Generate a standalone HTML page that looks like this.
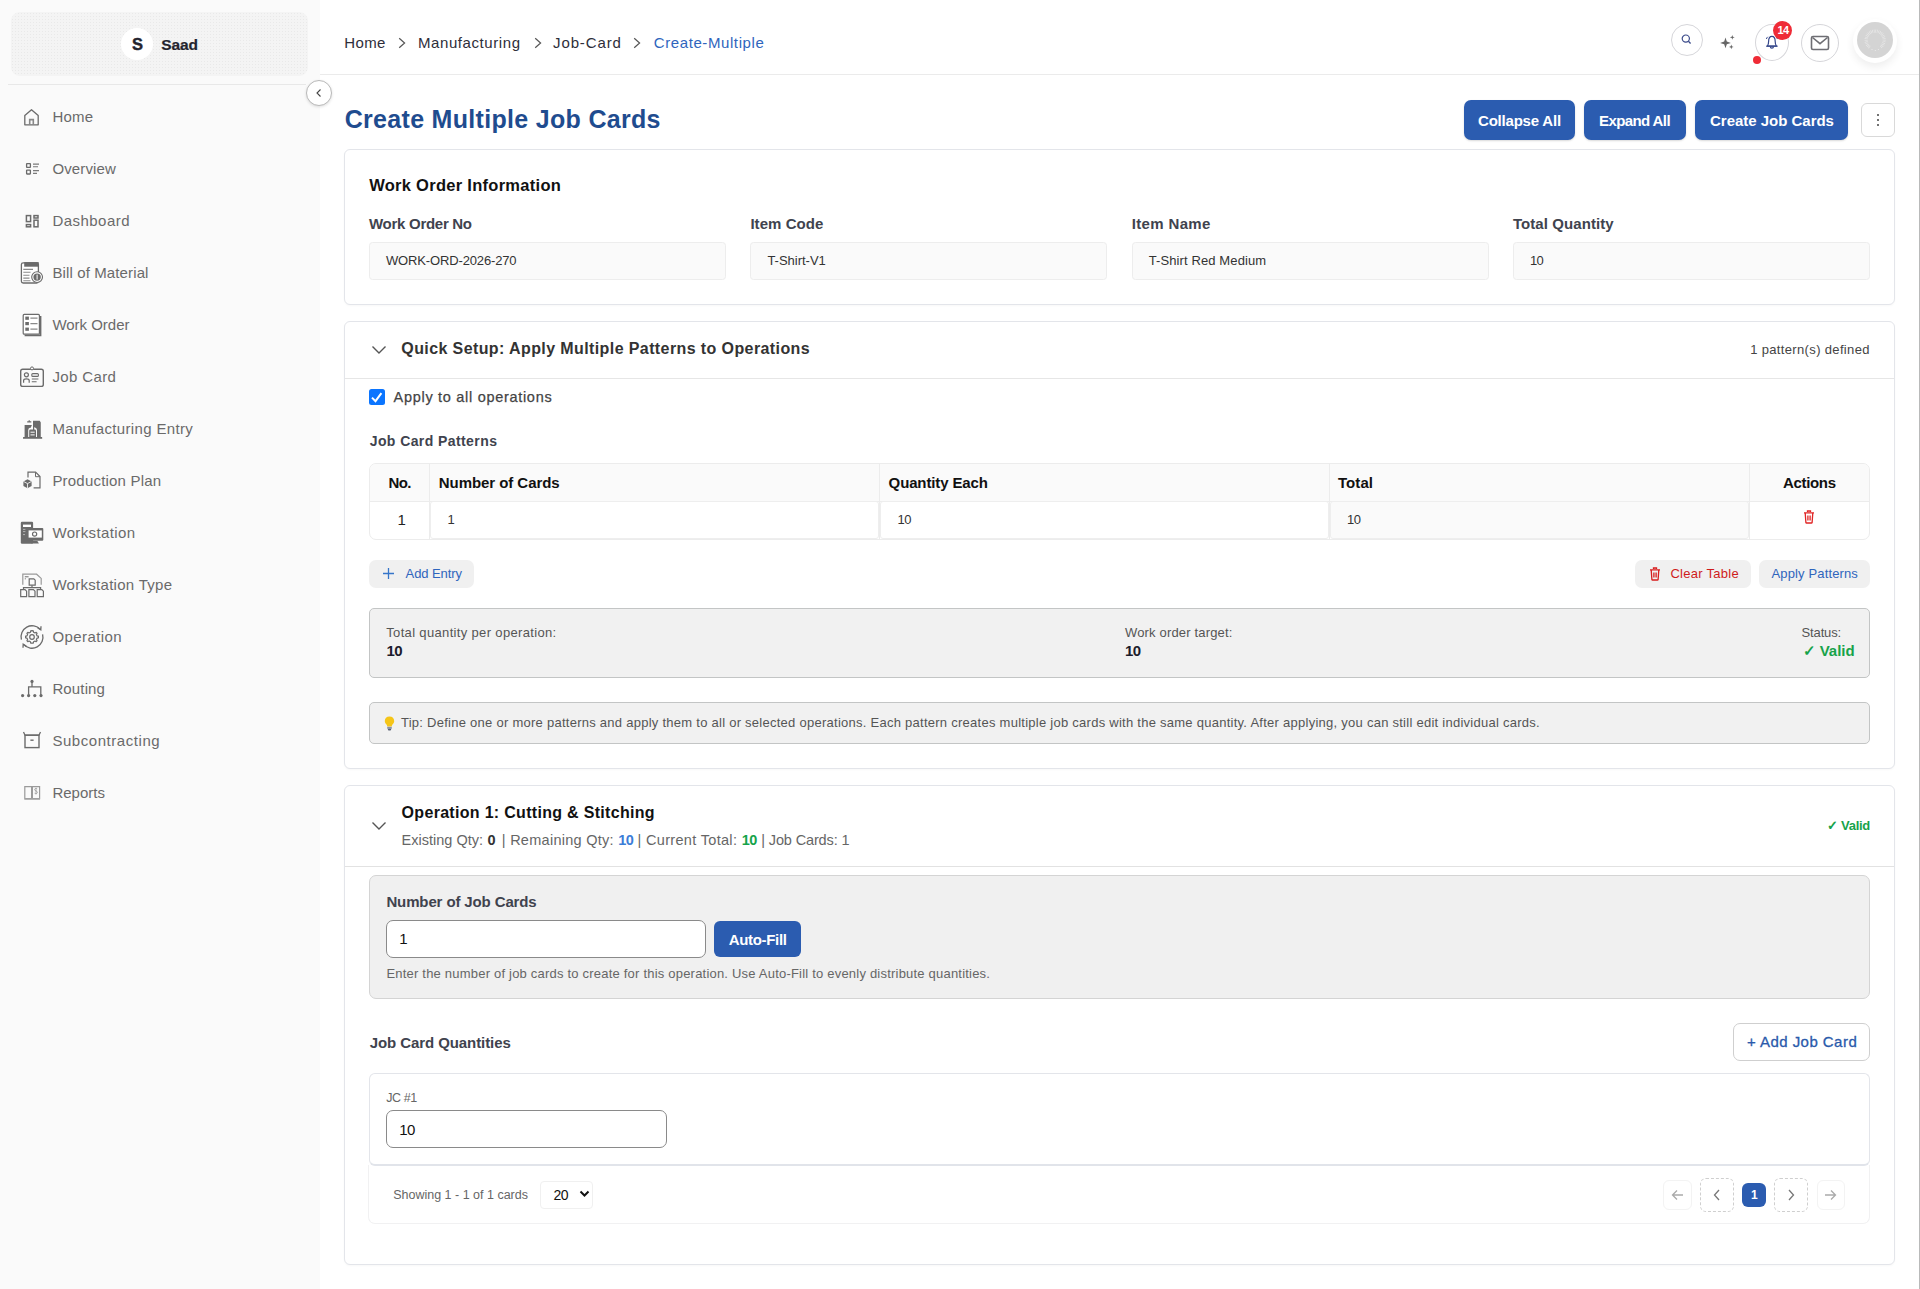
<!DOCTYPE html>
<html><head><meta charset="utf-8"><title>Create Multiple Job Cards</title>
<style>
html,body{margin:0;padding:0;}
body{width:1920px;height:1289px;position:relative;overflow:hidden;background:#fff;font-family:"Liberation Sans",sans-serif;}
.t{position:absolute;white-space:pre;}
.b{position:absolute;}
svg.b{overflow:visible;}
</style></head><body>
<div class="b" style="left:0px;top:0px;width:320px;height:1289px;background:#fafafa;"></div><div class="b" style="left:11px;top:12px;width:297px;height:64px;border-radius:9px;background-color:#f4f4f4;background-image:radial-gradient(#e9e9e9 0.55px,transparent 0.75px);background-size:3px 3px;"></div><div class="b" style="left:121px;top:28px;width:32px;height:32px;border-radius:50%;background:#fff;"></div><span class="t" style="left:132.00px;top:35.73px;font-size:16.5px;line-height:16.5px;color:#24242e;font-weight:700;-webkit-text-stroke:0.4px #24242e;">S</span><span class="t" style="left:161.30px;top:36.58px;font-size:15.5px;line-height:15.5px;color:#24242e;font-weight:700;letter-spacing:-0.167px;-webkit-text-stroke:0.2px #24242e;">Saad</span><div class="b" style="left:8px;top:84px;width:298px;height:1px;background:#e8e8e8;"></div><span class="t" style="left:52.40px;top:109.30px;font-size:15px;line-height:15px;color:#6a6a6a;letter-spacing:0.200px;">Home</span><span class="t" style="left:52.40px;top:161.30px;font-size:15px;line-height:15px;color:#6a6a6a;letter-spacing:0.143px;">Overview</span><span class="t" style="left:52.40px;top:213.30px;font-size:15px;line-height:15px;color:#6a6a6a;letter-spacing:0.466px;">Dashboard</span><span class="t" style="left:52.40px;top:265.30px;font-size:15px;line-height:15px;color:#6a6a6a;letter-spacing:0.123px;">Bill of Material</span><span class="t" style="left:52.40px;top:317.30px;font-size:15px;line-height:15px;color:#6a6a6a;letter-spacing:-0.017px;">Work Order</span><span class="t" style="left:52.40px;top:369.30px;font-size:15px;line-height:15px;color:#6a6a6a;letter-spacing:0.375px;">Job Card</span><span class="t" style="left:52.40px;top:421.30px;font-size:15px;line-height:15px;color:#6a6a6a;letter-spacing:0.342px;">Manufacturing Entry</span><span class="t" style="left:52.40px;top:473.30px;font-size:15px;line-height:15px;color:#6a6a6a;letter-spacing:0.202px;">Production Plan</span><span class="t" style="left:52.40px;top:525.30px;font-size:15px;line-height:15px;color:#6a6a6a;letter-spacing:0.372px;">Workstation</span><span class="t" style="left:52.40px;top:577.30px;font-size:15px;line-height:15px;color:#6a6a6a;letter-spacing:0.288px;">Workstation Type</span><span class="t" style="left:52.40px;top:629.30px;font-size:15px;line-height:15px;color:#6a6a6a;letter-spacing:0.428px;">Operation</span><span class="t" style="left:52.40px;top:681.30px;font-size:15px;line-height:15px;color:#6a6a6a;letter-spacing:0.142px;">Routing</span><span class="t" style="left:52.40px;top:733.30px;font-size:15px;line-height:15px;color:#6a6a6a;letter-spacing:0.552px;">Subcontracting</span><span class="t" style="left:52.40px;top:785.30px;font-size:15px;line-height:15px;color:#6a6a6a;letter-spacing:0.017px;">Reports</span><svg class="b" style="left:16px;top:101px" width="32" height="32" viewBox="0 0 32 32"><path d="M8.8 23.8 V14.6 L15.5 8.7 L22.2 14.6 V23.8 Z" fill="none" stroke="#6b6b6b" stroke-width="1.3" stroke-linejoin="round"/><path d="M13.7 23.8 V18.6 H17.3 V23.8" fill="none" stroke="#888" stroke-width="1.6"/></svg><svg class="b" style="left:16px;top:153px" width="32" height="32" viewBox="0 0 32 32"><g fill="none" stroke="#6b6b6b" stroke-width="1.3"><rect x="10.6" y="10.6" width="3.8" height="3.8" rx="0.4"/><rect x="10.6" y="17.2" width="3.8" height="3.8" rx="0.4"/></g><g stroke="#7a7a7a" stroke-width="1.1"><path d="M17 11.1 H23 M17 13.8 H22 M17 17.6 H23 M17 20.4 H21"/></g></svg><svg class="b" style="left:16px;top:205px" width="32" height="32" viewBox="0 0 32 32"><g fill="none" stroke="#6b6b6b" stroke-width="1.5"><rect x="10.4" y="10.6" width="4.2" height="6"/><rect x="18" y="10.6" width="4" height="2.4"/><rect x="10.4" y="19.6" width="4.2" height="2.2"/><rect x="18" y="15.2" width="4" height="6.6"/></g></svg><svg class="b" style="left:16px;top:257px" width="32" height="32" viewBox="0 0 32 32"><rect x="5.4" y="5.8" width="17" height="20.2" rx="1.8" fill="#fff" stroke="#6b6b6b" stroke-width="1.3"/><rect x="8.2" y="5.1" width="14.5" height="4.6" fill="#6b6b6b"/><g stroke="#8a8a8a" stroke-width="1.1"><path d="M7.3 12.4 H17 M7.3 15.3 H14.5 M7.3 18.3 H13.5 M7.3 21.1 H13.5 M7.3 23.8 H14.5"/></g><circle cx="21.1" cy="20.1" r="5.4" fill="#fff" stroke="#6b6b6b" stroke-width="1.1"/><circle cx="21.1" cy="20.1" r="3.7" fill="#6b6b6b"/><path d="M21.1 17.6 V22.6" stroke="#fff" stroke-width="1"/></svg><svg class="b" style="left:16px;top:309px" width="32" height="32" viewBox="0 0 32 32"><path d="M24.6 7 V26.4 H8.6" fill="none" stroke="#6b6b6b" stroke-width="1.6"/><rect x="7.2" y="5.4" width="16.2" height="19.8" rx="1" fill="#fff" stroke="#6b6b6b" stroke-width="1.2"/><g fill="#6b6b6b"><rect x="9.3" y="7.6" width="3.6" height="3.2"/><rect x="9.3" y="13" width="3.6" height="3.2"/><rect x="9.3" y="18.6" width="3.6" height="3.2"/></g><g stroke="#8a8a8a" stroke-width="1.2"><path d="M14.4 9.2 H21.5 M14.4 14.6 H21.5 M14.4 20.2 H21.5"/></g></svg><svg class="b" style="left:16px;top:361px" width="32" height="32" viewBox="0 0 32 32"><rect x="4.7" y="8.2" width="22.6" height="17.2" rx="2" fill="none" stroke="#6b6b6b" stroke-width="1.4"/><circle cx="16" cy="7.4" r="1.5" fill="#fafafa" stroke="#6b6b6b" stroke-width="1"/><circle cx="10.4" cy="13.8" r="2" fill="none" stroke="#6b6b6b" stroke-width="1.2"/><path d="M7.6 21.8 V19.6 C7.6 17.2 13.2 17.2 13.2 19.6 V21.8" fill="none" stroke="#6b6b6b" stroke-width="1.2"/><rect x="15.8" y="12.6" width="6.6" height="2.8" rx="1" fill="none" stroke="#6b6b6b" stroke-width="1.1"/><path d="M15.8 18 H22.4 M15.8 20.8 H20.6" stroke="#6b6b6b" stroke-width="1.1"/></svg><svg class="b" style="left:16px;top:413px" width="32" height="32" viewBox="0 0 32 32"><path d="M7.3 24.6 H26 M9.2 24.6 V12.6 H15 L14.2 14.6 M17.6 24.6 V8.3 H23.4 L24 9.5 V24.6" fill="none" stroke="#6b6b6b" stroke-width="1.2"/><path d="M9 24.6 V13 Q9 12.4 9.6 12.4 H15.4 L14.2 14.4 Q12.2 15 12.2 17 V24.6 Z M17.5 8.2 H23.4 L24.4 9.4 V24.6 H21 V17 Q21 15 19 14.4 L17.5 14 Z" fill="#6b6b6b"/><rect x="13.2" y="16.4" width="6.8" height="8.2" rx="1.4" fill="#6b6b6b"/><path d="M14.5 19.2 H18.7 M14.5 21.9 H18.7" stroke="#fff" stroke-width="1"/><path d="M11.2 8.8 H15.3 M13.2 7.2 V9" stroke="#6b6b6b" stroke-width="1.2"/><path d="M7 25 H26.2" stroke="#6b6b6b" stroke-width="1.4"/></svg><svg class="b" style="left:16px;top:465px" width="32" height="32" viewBox="0 0 32 32"><path d="M12 12.5 V7.2 H19.6 L24 11.6 V22.8 H17.6" fill="none" stroke="#6b6b6b" stroke-width="1.2"/><path d="M19.5 7.3 V11.7 H23.9" fill="none" stroke="#6b6b6b" stroke-width="1"/><path d="M11.5 14.2 L15.6 16.4 V21 L11.5 23.2 L7.4 21 V16.4 Z" fill="#6b6b6b"/><path d="M7.6 16.5 L11.5 18.6 L15.4 16.5 M11.5 18.6 V23" fill="none" stroke="#fff" stroke-width="0.8"/></svg><svg class="b" style="left:16px;top:517px" width="32" height="32" viewBox="0 0 32 32"><rect x="4.8" y="4.8" width="12.3" height="22" rx="1.2" fill="#6b6b6b"/><rect x="7" y="7.6" width="8" height="2.4" fill="#fff"/><path d="M7 12.4 H9.4 M7 14.6 H9.4 M7 17.6 H9" stroke="#bbb" stroke-width="0.9"/><rect x="10.9" y="10.9" width="16.4" height="12.9" rx="1" fill="#6b6b6b"/><rect x="12.6" y="13.4" width="13.2" height="7.2" fill="#fff"/><circle cx="18.6" cy="17.1" r="2.1" fill="none" stroke="#6b6b6b" stroke-width="1.2"/><path d="M15.3 26.4 L16.6 24 H21.4 L22.9 26.4 Z" fill="#6b6b6b"/></svg><svg class="b" style="left:16px;top:569px" width="32" height="32" viewBox="0 0 32 32"><path d="M6.8 15.8 V5.2 H20.6 L25.2 9.4 V15.8" fill="none" stroke="#9a9a9a" stroke-width="1.2"/><path d="M8.8 7.8 H12.6 M8.8 9.8 H9.8" stroke="#6b6b6b" stroke-width="1"/><g fill="none" stroke="#6b6b6b" stroke-width="1.2"><path d="M13.2 9.8 H17.8 L19.2 11.2 V16.2 H13.2 Z"/><path d="M7.5 20.2 V18.6 H24.6 V20.2 M16 16.2 V18.6"/><path d="M4.7 20.6 H9 L10.6 22.2 V27.6 H4.7 Z"/><path d="M12.9 20.6 H17.4 L19 22.2 V27.6 H12.9 Z"/><path d="M21.2 20.6 H25.8 L27.4 22.2 V27.6 H21.2 Z"/></g></svg><svg class="b" style="left:16px;top:621px" width="32" height="32" viewBox="0 0 32 32"><path d="M5.4 18.6 A11 11 0 0 1 24.2 8.4 M26.6 13.4 A11 11 0 0 1 7.8 23.6" fill="none" stroke="#6b6b6b" stroke-width="1.3"/><path d="M21.6 6.6 L24.8 8.8 L25 5.2" fill="none" stroke="#6b6b6b" stroke-width="1.3"/><path d="M10.4 25.4 L7.2 23.2 L7 26.8" fill="none" stroke="#6b6b6b" stroke-width="1.3"/><path d="M16 9.6 L17.3 9.9 L17.6 11.3 L19 12 L20.2 11.3 L21.1 12.3 L20.4 13.5 L21 14.8 L22.4 15.2 V16.8 L21 17.2 L20.4 18.5 L21.1 19.7 L20.2 20.7 L19 20 L17.6 20.7 L17.3 22.1 H14.7 L14.4 20.7 L13 20 L11.8 20.7 L10.9 19.7 L11.6 18.5 L11 17.2 L9.6 16.8 V15.2 L11 14.8 L11.6 13.5 L10.9 12.3 L11.8 11.3 L13 12 L14.4 11.3 L14.7 9.9 Z" fill="none" stroke="#6b6b6b" stroke-width="1.2" stroke-linejoin="round"/><circle cx="16" cy="16" r="2.3" fill="none" stroke="#6b6b6b" stroke-width="1.2"/></svg><svg class="b" style="left:16px;top:673px" width="32" height="32" viewBox="0 0 32 32"><path d="M16 8.6 V13.8 M12.6 22.4 V13.8 H24.8 V22.4" fill="none" stroke="#6b6b6b" stroke-width="1.3"/><g fill="#6b6b6b"><circle cx="16" cy="8.4" r="1.6"/><circle cx="6.6" cy="22.6" r="1.6"/><circle cx="12.6" cy="22.6" r="1.6"/><circle cx="18.8" cy="22.6" r="1.6"/><circle cx="25" cy="22.6" r="1.6"/></g></svg><svg class="b" style="left:16px;top:725px" width="32" height="32" viewBox="0 0 32 32"><path d="M7.5 7 L9 10.2 H23 L24.5 7" fill="none" stroke="#6b6b6b" stroke-width="1.3"/><rect x="9" y="10.2" width="14" height="12.4" fill="none" stroke="#6b6b6b" stroke-width="1.4"/><path d="M14.4 15.2 H17.6" stroke="#6b6b6b" stroke-width="1.4"/></svg><svg class="b" style="left:16px;top:777px" width="32" height="32" viewBox="0 0 32 32"><path d="M8.8 9.6 H15.6 V21.6 H8.8 Z M16.4 9.6 H23.6 V21.6 H16.4 Z" fill="none" stroke="#9a9a9a" stroke-width="1.2"/><path d="M8.4 22.2 H24" stroke="#aaa" stroke-width="1.2"/><path d="M21.2 11.8 C20.6 11.2 18.6 11.2 18.6 12.6 C18.6 14.2 21.4 13.6 21.4 15.4 C21.4 16.8 19.2 16.8 18.6 16.2 M20 10.8 V17.4" fill="none" stroke="#9a9a9a" stroke-width="0.8"/></svg><div class="b" style="left:306px;top:80px;width:24px;height:24px;border-radius:50%;background:#fff;border:1px solid #b9b9b9;box-shadow:0 1px 3px rgba(0,0,0,0.12);"></div><svg class="b" style="left:313px;top:87px" width="12" height="12" viewBox="0 0 12 12"><path d="M7.5 2.5 L4 6 L7.5 9.5" fill="none" stroke="#444" stroke-width="1.1"/></svg><div class="b" style="left:320px;top:74px;width:1599px;height:1px;background:#ebebeb;"></div><div class="b" style="left:1919px;top:0px;width:1px;height:1289px;background:#b9baba;"></div><span class="t" style="left:344.20px;top:35.20px;font-size:15px;line-height:15px;color:#2e2e3a;letter-spacing:0.400px;">Home</span><span class="t" style="left:418.00px;top:35.20px;font-size:15px;line-height:15px;color:#2e2e3a;letter-spacing:0.583px;">Manufacturing</span><span class="t" style="left:553.00px;top:35.20px;font-size:15px;line-height:15px;color:#2e2e3a;letter-spacing:0.893px;">Job-Card</span><span class="t" style="left:653.80px;top:35.20px;font-size:15px;line-height:15px;color:#2f65bd;letter-spacing:0.589px;">Create-Multiple</span><svg class="b" style="left:397px;top:37px" width="10" height="12" viewBox="0 0 10 12"><path d="M2.2 1.2 L7.6 6 L2.2 10.8" fill="none" stroke="#555" stroke-width="1.2"/></svg><svg class="b" style="left:532.5px;top:37px" width="10" height="12" viewBox="0 0 10 12"><path d="M2.2 1.2 L7.6 6 L2.2 10.8" fill="none" stroke="#555" stroke-width="1.2"/></svg><svg class="b" style="left:632px;top:37px" width="10" height="12" viewBox="0 0 10 12"><path d="M2.2 1.2 L7.6 6 L2.2 10.8" fill="none" stroke="#555" stroke-width="1.2"/></svg><span class="t" style="left:344.70px;top:106.64px;font-size:25px;line-height:25px;color:#1f4c8f;font-weight:700;letter-spacing:0.309px;">Create Multiple Job Cards</span><div class="b" style="left:1464px;top:100px;width:111px;height:40px;background:#2b5cb0;border-radius:7px;box-shadow:0 1px 2px rgba(0,0,0,0.15);"></div><span class="t" style="left:1478.00px;top:112.60px;font-size:15px;line-height:15px;color:#ffffff;font-weight:700;letter-spacing:-0.205px;">Collapse All</span><div class="b" style="left:1584px;top:100px;width:102px;height:40px;background:#2b5cb0;border-radius:7px;box-shadow:0 1px 2px rgba(0,0,0,0.15);"></div><span class="t" style="left:1599.00px;top:112.60px;font-size:15px;line-height:15px;color:#ffffff;font-weight:700;letter-spacing:-0.600px;">Expand All</span><div class="b" style="left:1695px;top:100px;width:153px;height:40px;background:#2b5cb0;border-radius:7px;box-shadow:0 1px 2px rgba(0,0,0,0.15);"></div><span class="t" style="left:1710.00px;top:112.60px;font-size:15px;line-height:15px;color:#ffffff;font-weight:700;letter-spacing:-0.017px;">Create Job Cards</span><div class="b" style="left:1861px;top:103px;width:34px;height:34px;border:1px solid #d9d9d9;border-radius:6px;box-sizing:border-box;background:#fff;"></div><div class="b" style="left:1877px;top:114px;width:2px;height:2px;background:#444;border-radius:50%;"></div><div class="b" style="left:1877px;top:119px;width:2px;height:2px;background:#444;border-radius:50%;"></div><div class="b" style="left:1877px;top:124px;width:2px;height:2px;background:#444;border-radius:50%;"></div><div class="b" style="left:344px;top:149px;width:1551px;height:156px;border:1px solid #e3e5ea;border-radius:6px;background:#fff;box-sizing:border-box;box-shadow:0 1px 2px rgba(0,0,0,0.03);"></div><span class="t" style="left:369.20px;top:176.93px;font-size:16.5px;line-height:16.5px;color:#111111;font-weight:700;letter-spacing:0.279px;">Work Order Information</span><span class="t" style="left:369.00px;top:216.30px;font-size:15px;line-height:15px;color:#40434e;font-weight:700;letter-spacing:-0.281px;">Work Order No</span><div class="b" style="left:369px;top:242px;width:357px;height:38px;background:#fafafa;border:1px solid #ededed;border-radius:3.5px;box-sizing:border-box;"></div><span class="t" style="left:386.00px;top:254.00px;font-size:13px;line-height:13px;color:#333333;letter-spacing:-0.148px;">WORK-ORD-2026-270</span><span class="t" style="left:750.40px;top:216.30px;font-size:15px;line-height:15px;color:#40434e;font-weight:700;letter-spacing:0.062px;">Item Code</span><div class="b" style="left:750.4px;top:242px;width:357px;height:38px;background:#fafafa;border:1px solid #ededed;border-radius:3.5px;box-sizing:border-box;"></div><span class="t" style="left:767.40px;top:254.00px;font-size:13px;line-height:13px;color:#333333;letter-spacing:-0.011px;">T-Shirt-V1</span><span class="t" style="left:1131.70px;top:216.30px;font-size:15px;line-height:15px;color:#40434e;font-weight:700;letter-spacing:0.353px;">Item Name</span><div class="b" style="left:1131.7px;top:242px;width:357px;height:38px;background:#fafafa;border:1px solid #ededed;border-radius:3.5px;box-sizing:border-box;"></div><span class="t" style="left:1148.70px;top:254.00px;font-size:13px;line-height:13px;color:#333333;letter-spacing:0.110px;">T-Shirt Red Medium</span><span class="t" style="left:1512.90px;top:216.30px;font-size:15px;line-height:15px;color:#40434e;font-weight:700;letter-spacing:0.081px;">Total Quantity</span><div class="b" style="left:1512.9px;top:242px;width:357px;height:38px;background:#fafafa;border:1px solid #ededed;border-radius:3.5px;box-sizing:border-box;"></div><span class="t" style="left:1529.90px;top:254.00px;font-size:13px;line-height:13px;color:#333333;letter-spacing:-0.520px;">10</span><div class="b" style="left:344px;top:321px;width:1551px;height:448px;border:1px solid #e3e5ea;border-radius:6px;background:#fff;box-sizing:border-box;box-shadow:0 1px 2px rgba(0,0,0,0.03);"></div><svg class="b" style="left:371px;top:344px" width="16" height="12" viewBox="0 0 16 12"><path d="M1.5 2.5 L8 9 L14.5 2.5" fill="none" stroke="#555" stroke-width="1.4"/></svg><span class="t" style="left:401.30px;top:341.46px;font-size:16px;line-height:16px;color:#333333;font-weight:700;letter-spacing:0.399px;">Quick Setup: Apply Multiple Patterns to Operations</span><span class="t" style="left:1750.20px;top:342.90px;font-size:13px;line-height:13px;color:#444444;letter-spacing:0.345px;">1 pattern(s) defined</span><div class="b" style="left:345px;top:378px;width:1549px;height:1px;background:#e6e6e6;"></div><div class="b" style="left:369px;top:389px;width:16px;height:16px;background:#0b75ff;border-radius:2.5px;"></div><svg class="b" style="left:369px;top:389px" width="16" height="16" viewBox="0 0 16 16"><path d="M3 8.6 L6.5 12.2 L12.4 4.2" fill="none" stroke="#fff" stroke-width="2"/></svg><span class="t" style="left:393.60px;top:389.63px;font-size:14.5px;line-height:14.5px;color:#444444;letter-spacing:0.699px;-webkit-text-stroke:0.25px #444444;">Apply to all operations</span><span class="t" style="left:369.70px;top:433.85px;font-size:14px;line-height:14px;color:#40434e;font-weight:700;letter-spacing:0.417px;">Job Card Patterns</span><div class="b" style="left:369px;top:463px;width:1501px;height:77px;border:1px solid #ececec;border-radius:7px;box-sizing:border-box;overflow:hidden;background:#fff;"><div style="position:absolute;left:0;top:0;width:1501px;height:37px;background:#fafafa;border-bottom:1px solid #ececec;"></div></div><div class="b" style="left:429px;top:464px;width:1px;height:75px;background:#ececec;"></div><div class="b" style="left:879px;top:464px;width:1px;height:75px;background:#ececec;"></div><div class="b" style="left:1329px;top:464px;width:1px;height:75px;background:#ececec;"></div><div class="b" style="left:1749px;top:464px;width:1px;height:75px;background:#ececec;"></div><div class="b" style="left:430px;top:501px;width:449px;height:38px;background:#fff;border:1px solid #eeeeee;border-radius:3px;box-sizing:border-box;"></div><div class="b" style="left:880px;top:501px;width:449px;height:38px;background:#fff;border:1px solid #eeeeee;border-radius:3px;box-sizing:border-box;"></div><div class="b" style="left:1330px;top:501px;width:419px;height:38px;background:#fafafa;border:1px solid #eeeeee;border-radius:3px;box-sizing:border-box;"></div><span class="t" style="left:388.50px;top:474.60px;font-size:15px;line-height:15px;color:#111111;font-weight:700;letter-spacing:-0.600px;">No.</span><span class="t" style="left:438.80px;top:474.60px;font-size:15px;line-height:15px;color:#111111;font-weight:700;letter-spacing:-0.059px;">Number of Cards</span><span class="t" style="left:888.60px;top:474.60px;font-size:15px;line-height:15px;color:#111111;font-weight:700;letter-spacing:-0.131px;">Quantity Each</span><span class="t" style="left:1338.00px;top:474.60px;font-size:15px;line-height:15px;color:#111111;font-weight:700;letter-spacing:0.062px;">Total</span><span class="t" style="left:1783.00px;top:474.60px;font-size:15px;line-height:15px;color:#111111;font-weight:700;letter-spacing:-0.333px;">Actions</span><span class="t" style="left:397.50px;top:511.80px;font-size:15px;line-height:15px;color:#222222;">1</span><span class="t" style="left:447.50px;top:512.70px;font-size:13px;line-height:13px;color:#333333;">1</span><span class="t" style="left:897.50px;top:512.70px;font-size:13px;line-height:13px;color:#333333;letter-spacing:-0.520px;">10</span><span class="t" style="left:1347.00px;top:512.70px;font-size:13px;line-height:13px;color:#333333;letter-spacing:-0.520px;">10</span><svg class="b" style="left:1803px;top:510px" width="12" height="14" viewBox="0 0 12 14"><path d="M4.5 2 V1 H7.5 V2 M1 2.8 H11 M2.2 3 L2.9 12.6 Q3 13 3.5 13 H8.5 Q9 13 9.1 12.6 L9.8 3 M4.9 5.5 V10.5 M7.1 5.5 V10.5" fill="none" stroke="#e02424" stroke-width="1.3"/></svg><div class="b" style="left:369px;top:560px;width:105px;height:28px;background:#f0f0f0;border-radius:7px;"></div><svg class="b" style="left:382px;top:567px" width="13" height="13" viewBox="0 0 13 13"><path d="M6.5 1 V12 M1 6.5 H12" stroke="#3575c9" stroke-width="1.3"/></svg><span class="t" style="left:405.60px;top:567.30px;font-size:13px;line-height:13px;color:#2f65bd;letter-spacing:-0.091px;">Add Entry</span><div class="b" style="left:1635px;top:560px;width:116px;height:28px;background:#f0f0f0;border-radius:7px;"></div><svg class="b" style="left:1649px;top:567px" width="12" height="14" viewBox="0 0 12 14"><path d="M4.5 2 V1 H7.5 V2 M1 2.8 H11 M2.2 3 L2.9 12.6 Q3 13 3.5 13 H8.5 Q9 13 9.1 12.6 L9.8 3 M4.9 5.5 V10.5 M7.1 5.5 V10.5" fill="none" stroke="#d71d1d" stroke-width="1.3"/></svg><span class="t" style="left:1670.40px;top:566.90px;font-size:13px;line-height:13px;color:#cf1b1b;letter-spacing:0.280px;">Clear Table</span><div class="b" style="left:1759px;top:560px;width:111px;height:28px;background:#f0f0f0;border-radius:7px;"></div><span class="t" style="left:1771.50px;top:566.90px;font-size:13px;line-height:13px;color:#2f65bd;letter-spacing:0.138px;">Apply Patterns</span><div class="b" style="left:369px;top:608px;width:1501px;height:70px;background:#f1f1f1;border:1px solid #c3c5c5;border-radius:5px;box-sizing:border-box;"></div><span class="t" style="left:386.25px;top:626.00px;font-size:13px;line-height:13px;color:#555555;letter-spacing:0.339px;">Total quantity per operation:</span><span class="t" style="left:386.50px;top:643.20px;font-size:15px;line-height:15px;color:#1c1c2c;font-weight:700;letter-spacing:-0.600px;">10</span><span class="t" style="left:1125.00px;top:625.90px;font-size:13px;line-height:13px;color:#555555;letter-spacing:0.165px;">Work order target:</span><span class="t" style="left:1125.00px;top:643.20px;font-size:15px;line-height:15px;color:#1c1c2c;font-weight:700;letter-spacing:-0.600px;">10</span><span class="t" style="left:1801.60px;top:625.90px;font-size:13px;line-height:13px;color:#555555;letter-spacing:-0.150px;">Status:</span><span class="t" style="left:1802.60px;top:643.30px;font-size:15px;line-height:15px;color:#17a34a;font-weight:700;letter-spacing:-0.029px;">✓ Valid</span><div class="b" style="left:369px;top:702px;width:1501px;height:42px;background:#f1f1f1;border:1px solid #c3c5c5;border-radius:5px;box-sizing:border-box;"></div><svg class="b" style="left:384px;top:716px" width="11" height="15" viewBox="0 0 11 15"><path d="M5.5 0.5 C2.5 0.5 0.8 2.6 0.8 4.9 C0.8 6.7 1.9 7.7 2.7 8.8 C3.1 9.4 3.2 10 3.2 10.5 H7.8 C7.8 10 7.9 9.4 8.3 8.8 C9.1 7.7 10.2 6.7 10.2 4.9 C10.2 2.6 8.5 0.5 5.5 0.5 Z" fill="#f5c518"/><rect x="3.2" y="10.8" width="4.6" height="2" fill="#8a93a6"/><rect x="3.8" y="12.8" width="3.4" height="1.6" rx="0.8" fill="#5a6275"/></svg><span class="t" style="left:401.00px;top:716.00px;font-size:13px;line-height:13px;color:#555555;letter-spacing:0.260px;">Tip: Define one or more patterns and apply them to all or selected operations. Each pattern creates multiple job cards with the same quantity. After applying, you can still edit individual cards.</span><div class="b" style="left:344px;top:785px;width:1551px;height:480px;border:1px solid #e3e5ea;border-radius:6px;background:#fff;box-sizing:border-box;box-shadow:0 1px 2px rgba(0,0,0,0.03);"></div><svg class="b" style="left:371px;top:820px" width="16" height="12" viewBox="0 0 16 12"><path d="M1.5 2.5 L8 9 L14.5 2.5" fill="none" stroke="#555" stroke-width="1.4"/></svg><span class="t" style="left:401.60px;top:805.36px;font-size:16px;line-height:16px;color:#111111;font-weight:700;letter-spacing:0.306px;">Operation 1: Cutting &amp; Stitching</span><span class="t" style="left:401.60px;top:832.73px;font-size:14.5px;line-height:14.5px;color:#666666;">Existing Qty:</span><span class="t" style="left:487.60px;top:832.73px;font-size:14.5px;line-height:14.5px;color:#333333;font-weight:700;">0</span><span class="t" style="left:501.80px;top:832.73px;font-size:14.5px;line-height:14.5px;color:#666666;letter-spacing:0.270px;">| Remaining Qty:</span><span class="t" style="left:618.30px;top:832.73px;font-size:14.5px;line-height:14.5px;color:#3b7dd8;font-weight:700;letter-spacing:-0.580px;">10</span><span class="t" style="left:637.50px;top:832.73px;font-size:14.5px;line-height:14.5px;color:#666666;letter-spacing:0.325px;">| Current Total:</span><span class="t" style="left:741.70px;top:832.73px;font-size:14.5px;line-height:14.5px;color:#16a34a;font-weight:700;letter-spacing:-0.580px;">10</span><span class="t" style="left:761.25px;top:832.73px;font-size:14.5px;line-height:14.5px;color:#666666;letter-spacing:-0.135px;">| Job Cards: 1</span><span class="t" style="left:1827.00px;top:819.00px;font-size:13px;line-height:13px;color:#17a34a;font-weight:700;letter-spacing:-0.292px;">✓ Valid</span><div class="b" style="left:345px;top:866px;width:1549px;height:1px;background:#e2e2e2;"></div><div class="b" style="left:369px;top:875px;width:1501px;height:124px;background:#f0f0f0;border:1px solid #d4d4d4;border-radius:7px;box-sizing:border-box;"></div><span class="t" style="left:386.40px;top:894.10px;font-size:15px;line-height:15px;color:#40434e;font-weight:700;letter-spacing:-0.122px;">Number of Job Cards</span><div class="b" style="left:386px;top:920px;width:320px;height:38px;background:#fff;border:1px solid #8a8a8a;border-radius:7px;box-sizing:border-box;"></div><span class="t" style="left:399.30px;top:931.10px;font-size:15px;line-height:15px;color:#111111;">1</span><div class="b" style="left:714px;top:921px;width:87px;height:36px;background:#2b5cb0;border-radius:6px;"></div><span class="t" style="left:728.80px;top:931.50px;font-size:15px;line-height:15px;color:#ffffff;font-weight:700;letter-spacing:-0.334px;">Auto-Fill</span><span class="t" style="left:386.40px;top:966.90px;font-size:13px;line-height:13px;color:#666666;letter-spacing:0.208px;">Enter the number of job cards to create for this operation. Use Auto-Fill to evenly distribute quantities.</span><span class="t" style="left:369.70px;top:1034.70px;font-size:15px;line-height:15px;color:#40434e;font-weight:700;letter-spacing:-0.078px;">Job Card Quantities</span><div class="b" style="left:1733px;top:1023px;width:137px;height:38px;background:#fff;border:1px solid #cfcfcf;border-radius:7px;box-sizing:border-box;"></div><span class="t" style="left:1746.90px;top:1034.30px;font-size:15px;line-height:15px;color:#2a5aab;letter-spacing:0.463px;-webkit-text-stroke:0.3px #2a5aab;">+ Add Job Card</span><div class="b" style="left:368px;top:1165px;width:1502px;height:59px;background:#fff;border:1px solid #f1f1f2;border-top:none;border-radius:0 0 7px 7px;box-sizing:border-box;"></div><div class="b" style="left:369px;top:1073px;width:1501px;height:93px;background:#fff;border:1px solid #e3e5ea;border-bottom:2px solid #e1e4ea;border-radius:6px;box-sizing:border-box;"></div><span class="t" style="left:386.20px;top:1091.72px;font-size:12.5px;line-height:12.5px;color:#666666;letter-spacing:-0.406px;">JC #1</span><div class="b" style="left:386px;top:1110px;width:281px;height:38px;background:#fff;border:1px solid #8a8a8a;border-radius:7px;box-sizing:border-box;"></div><span class="t" style="left:399.30px;top:1121.50px;font-size:15px;line-height:15px;color:#111111;letter-spacing:-0.600px;">10</span><span class="t" style="left:393.20px;top:1188.92px;font-size:12.5px;line-height:12.5px;color:#666666;">Showing 1 - 1 of 1 cards</span><div class="b" style="left:540px;top:1181px;width:53px;height:28px;background:#fff;border:1px solid #f0f0f0;border-radius:4px;box-sizing:border-box;"></div><span class="t" style="left:553.60px;top:1188.15px;font-size:14px;line-height:14px;color:#111111;letter-spacing:-0.560px;">20</span><svg class="b" style="left:579px;top:1190px" width="11" height="8" viewBox="0 0 11 8"><path d="M1.5 1.5 L5.5 5.5 L9.5 1.5" fill="none" stroke="#111" stroke-width="2"/></svg><div class="b" style="left:1663px;top:1180px;width:29px;height:30px;border:1px solid #f3f3f3;border-radius:6px;box-sizing:border-box;"></div><div class="b" style="left:1700px;top:1178px;width:34px;height:34px;border:1px dashed #cfcfcf;border-radius:6px;box-sizing:border-box;"></div><div class="b" style="left:1742px;top:1183px;width:24px;height:24px;background:#2b5cb0;border-radius:6px;"></div><span class="t" style="left:1751.00px;top:1189.34px;font-size:12px;line-height:12px;color:#ffffff;font-weight:700;">1</span><div class="b" style="left:1774px;top:1178px;width:34px;height:34px;border:1px dashed #cfcfcf;border-radius:6px;box-sizing:border-box;"></div><div class="b" style="left:1817px;top:1180px;width:28px;height:30px;border:1px solid #f3f3f3;border-radius:6px;box-sizing:border-box;"></div><svg class="b" style="left:1671px;top:1189px" width="13" height="12" viewBox="0 0 13 12"><path d="M12 6 H1.5 M6 1.5 L1.5 6 L6 10.5" fill="none" stroke="#aaa" stroke-width="1.3"/></svg><svg class="b" style="left:1711px;top:1188px" width="12" height="14" viewBox="0 0 12 14"><path d="M8 2 L3.5 7 L8 12" fill="none" stroke="#777" stroke-width="1.3"/></svg><svg class="b" style="left:1785px;top:1188px" width="12" height="14" viewBox="0 0 12 14"><path d="M4 2 L8.5 7 L4 12" fill="none" stroke="#777" stroke-width="1.3"/></svg><svg class="b" style="left:1824px;top:1189px" width="13" height="12" viewBox="0 0 13 12"><path d="M1 6 H11.5 M7 1.5 L11.5 6 L7 10.5" fill="none" stroke="#aaa" stroke-width="1.3"/></svg><div class="b" style="left:1671px;top:24px;width:32px;height:32px;border:1px solid #d6d6da;border-radius:50%;box-sizing:border-box;"></div><svg class="b" style="left:1680px;top:33px" width="13" height="13" viewBox="0 0 13 13"><circle cx="5.8" cy="5.6" r="3.6" fill="none" stroke="#3a4a8a" stroke-width="1.2"/><path d="M8.4 8.3 L10.6 10.5" stroke="#3a4a8a" stroke-width="1.3"/></svg><svg class="b" style="left:1719px;top:34px" width="18" height="18" viewBox="0 0 18 18"><path d="M6.5 3.5 L7.8 7.6 L11.9 8.9 L7.8 10.2 L6.5 14.3 L5.2 10.2 L1.1 8.9 L5.2 7.6 Z" fill="#666"/><path d="M13.3 0.9 L13.9 2.7 L15.7 3.3 L13.9 3.9 L13.3 5.7 L12.7 3.9 L10.9 3.3 L12.7 2.7 Z" fill="#666"/><path d="M12.3 10.6 L12.9 12.3 L14.6 12.9 L12.9 13.5 L12.3 15.2 L11.7 13.5 L10 12.9 L11.7 12.3 Z" fill="#666"/></svg><div class="b" style="left:1755px;top:24px;width:34px;height:37px;border:1px solid #d6d6da;border-radius:50%;box-sizing:border-box;"></div><svg class="b" style="left:1764px;top:33px" width="16" height="18" viewBox="0 0 16 18"><path d="M3.4 13 C4.3 11.8 4.6 10.6 4.6 8.6 C4.6 5.3 5.9 3.4 7.9 3.4 C9.9 3.4 11.2 5.3 11.2 8.6 C11.2 10.6 11.5 11.8 12.4 13 Z" fill="none" stroke="#34468a" stroke-width="1.2" stroke-linejoin="round"/><path d="M2.2 13.2 H13.6" stroke="#34468a" stroke-width="1.3"/><path d="M6.3 13.6 A1.6 1.6 0 0 0 9.5 13.6" fill="none" stroke="#34468a" stroke-width="1.2"/><path d="M2.4 6 Q2.8 4.6 3.8 3.8 M13.4 6 Q13 4.6 12 3.8" fill="none" stroke="#34468a" stroke-width="1"/></svg><div class="b" style="left:1773px;top:21px;width:19px;height:19px;background:#ef2b36;border-radius:50%;"></div><span class="t" style="left:1777.40px;top:24.69px;font-size:11px;line-height:11px;color:#ffffff;font-weight:700;letter-spacing:-0.440px;">14</span><div class="b" style="left:1753px;top:56px;width:8px;height:8px;background:#ef2b36;border-radius:50%;"></div><div class="b" style="left:1801px;top:24px;width:38px;height:38px;border:1px solid #d6d6da;border-radius:50%;box-sizing:border-box;"></div><svg class="b" style="left:1810px;top:35px" width="20" height="16" viewBox="0 0 20 16"><rect x="1.5" y="1.5" width="17" height="13" rx="1.5" fill="none" stroke="#6e6e73" stroke-width="1.6"/><path d="M2.5 2.5 L10 8.6 L17.5 2.5" fill="none" stroke="#6e6e73" stroke-width="1.6"/></svg><div class="b" style="left:1853px;top:19px;width:44px;height:44px;border-radius:50%;background:#fff;box-shadow:0 4px 8px rgba(0,0,0,0.07);"></div><div class="b" style="left:1857px;top:22px;width:36px;height:36px;background:#d4d4d4;border-radius:50%;"></div><svg class="b" style="left:1857px;top:22px" width="36" height="36" viewBox="0 0 36 36"><path d="M12.6 25.2 A9 9 0 1 1 23.6 25.2" fill="none" stroke="#f2f2f2" stroke-width="3.2" stroke-dasharray="0.6 0.9" opacity="0.75"/><g fill="#eeeeee"><circle cx="15" cy="27.6" r="0.5"/><circle cx="18.3" cy="28.4" r="0.5"/><circle cx="21.4" cy="27.4" r="0.5"/></g></svg>
</body></html>
